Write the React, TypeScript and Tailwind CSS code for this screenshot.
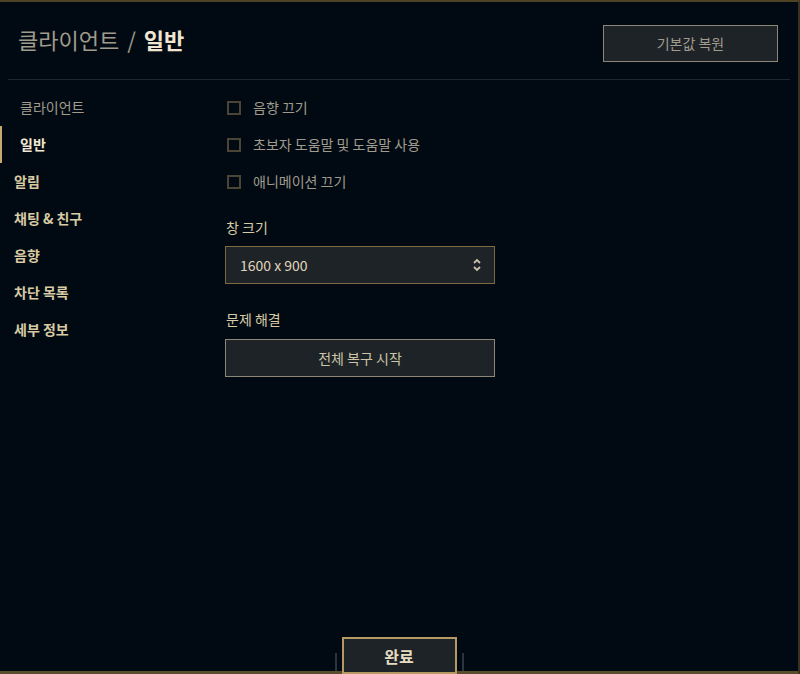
import { useState } from "react"

const font = { fontFamily: '"Noto Sans CJK KR", "Noto Sans", sans-serif' }

const navItems = ["알림", "채팅 & 친구", "음향", "차단 목록", "세부 정보"]

const checks = ["음향 끄기", "초보자 도움말 및 도움말 사용", "애니메이션 끄기"]

function Checkbox({ label }: { label: string }) {
  const [on, setOn] = useState(false)
  return (
    <button onClick={() => setOn(!on)} className="h-[37px] flex items-center gap-[12px] pl-[2px] text-left">
      <span className="w-[14px] h-[14px] border-2 border-[#4a4536] flex items-center justify-center">
        {on && <span className="w-[6px] h-[6px] bg-[#c8aa6e]" />}
      </span>
      <span className="text-[14px] text-[#a09b8c]">{label}</span>
    </button>
  )
}

export default function App() {
  return (
    <div style={font} className="w-[800px] h-[674px] bg-[#010a13] flex flex-col border-t-2 border-[#4e4224] border-r-2 border-r-[#3a3220] overflow-hidden">
      {/* header */}
      <div className="h-[77px] flex items-center justify-between pl-[18px] pr-[20px] shrink-0">
        <h1 className="text-[22px] text-[#a09b8c] -mt-[2px]">
          클라이언트 <span className="mx-[3px]">/</span> <span className="font-bold text-[#f0e6d2]">일반</span>
        </h1>
        <button className="mt-[6px] w-[175px] h-[37px] border border-[#8c8776] bg-[#1e2328] text-[14px] text-[#a09b8c]">
          기본값 복원
        </button>
      </div>
      <div className="mx-2 h-px bg-[#1e2630] shrink-0" />

      <div className="flex flex-1 pt-[9px]">
        {/* sidebar */}
        <nav className="w-[225px] flex flex-col shrink-0">
          <div className="h-[37px] flex items-center pl-[20px] text-[14px] text-[#a09b8c]">클라이언트</div>
          <div className="h-[37px] flex items-center pl-[20px] text-[14px] font-bold text-[#f0e6d2] border-l-2 border-[#c8aa6e]">
            <span className="-ml-[2px]">일반</span>
          </div>
          {navItems.map((n) => (
            <div key={n} className="h-[37px] flex items-center pl-[14px] text-[14px] font-bold text-[#d8cba4]">
              {n}
            </div>
          ))}
        </nav>

        {/* content */}
        <div className="flex flex-col">
          {checks.map((c) => (
            <Checkbox key={c} label={c} />
          ))}

          <div className="mt-[17px] text-[14px] text-[#d8cba4] pl-px">창 크기</div>
          <div className="mt-[8px] w-[270px] h-[38px] border border-[#7d6a45] bg-[#1e2328] flex items-center justify-between pl-[14px] pr-[12px]">
            <span className="text-[14px] text-[#e0d6bc]">1600 x 900</span>
            <svg width="10" height="16" viewBox="0 0 10 16" fill="none" stroke="#c8c0a8" strokeWidth="1.8">
              <path d="M2 6 L5 3 L8 6" />
              <path d="M2 10 L5 13 L8 10" />
            </svg>
          </div>

          <div className="mt-[25px] text-[14px] text-[#d8cba4] pl-px">문제 해결</div>
          <button className="mt-[9px] w-[270px] h-[38px] border border-[#8c8776] bg-[#1e2328] text-[14px] text-[#cdc3a6]">
            전체 복구 시작
          </button>
        </div>
      </div>

      {/* footer */}
      <div className="h-[38px] flex items-end justify-center shrink-0 border-b-[3px] border-[#5a4d2e]">
        <div className="w-[2px] h-[18px] bg-[#2a3442] mr-[5px]" />
        <button className="w-[115px] h-[37px] -mb-[3px] border-2 border-[#b49a62] bg-[#1e2328] text-[16px] font-bold text-[#e6dcc2]">
          완료
        </button>
        <div className="w-[2px] h-[18px] bg-[#2a3442] ml-[5px]" />
      </div>
    </div>
  )
}
